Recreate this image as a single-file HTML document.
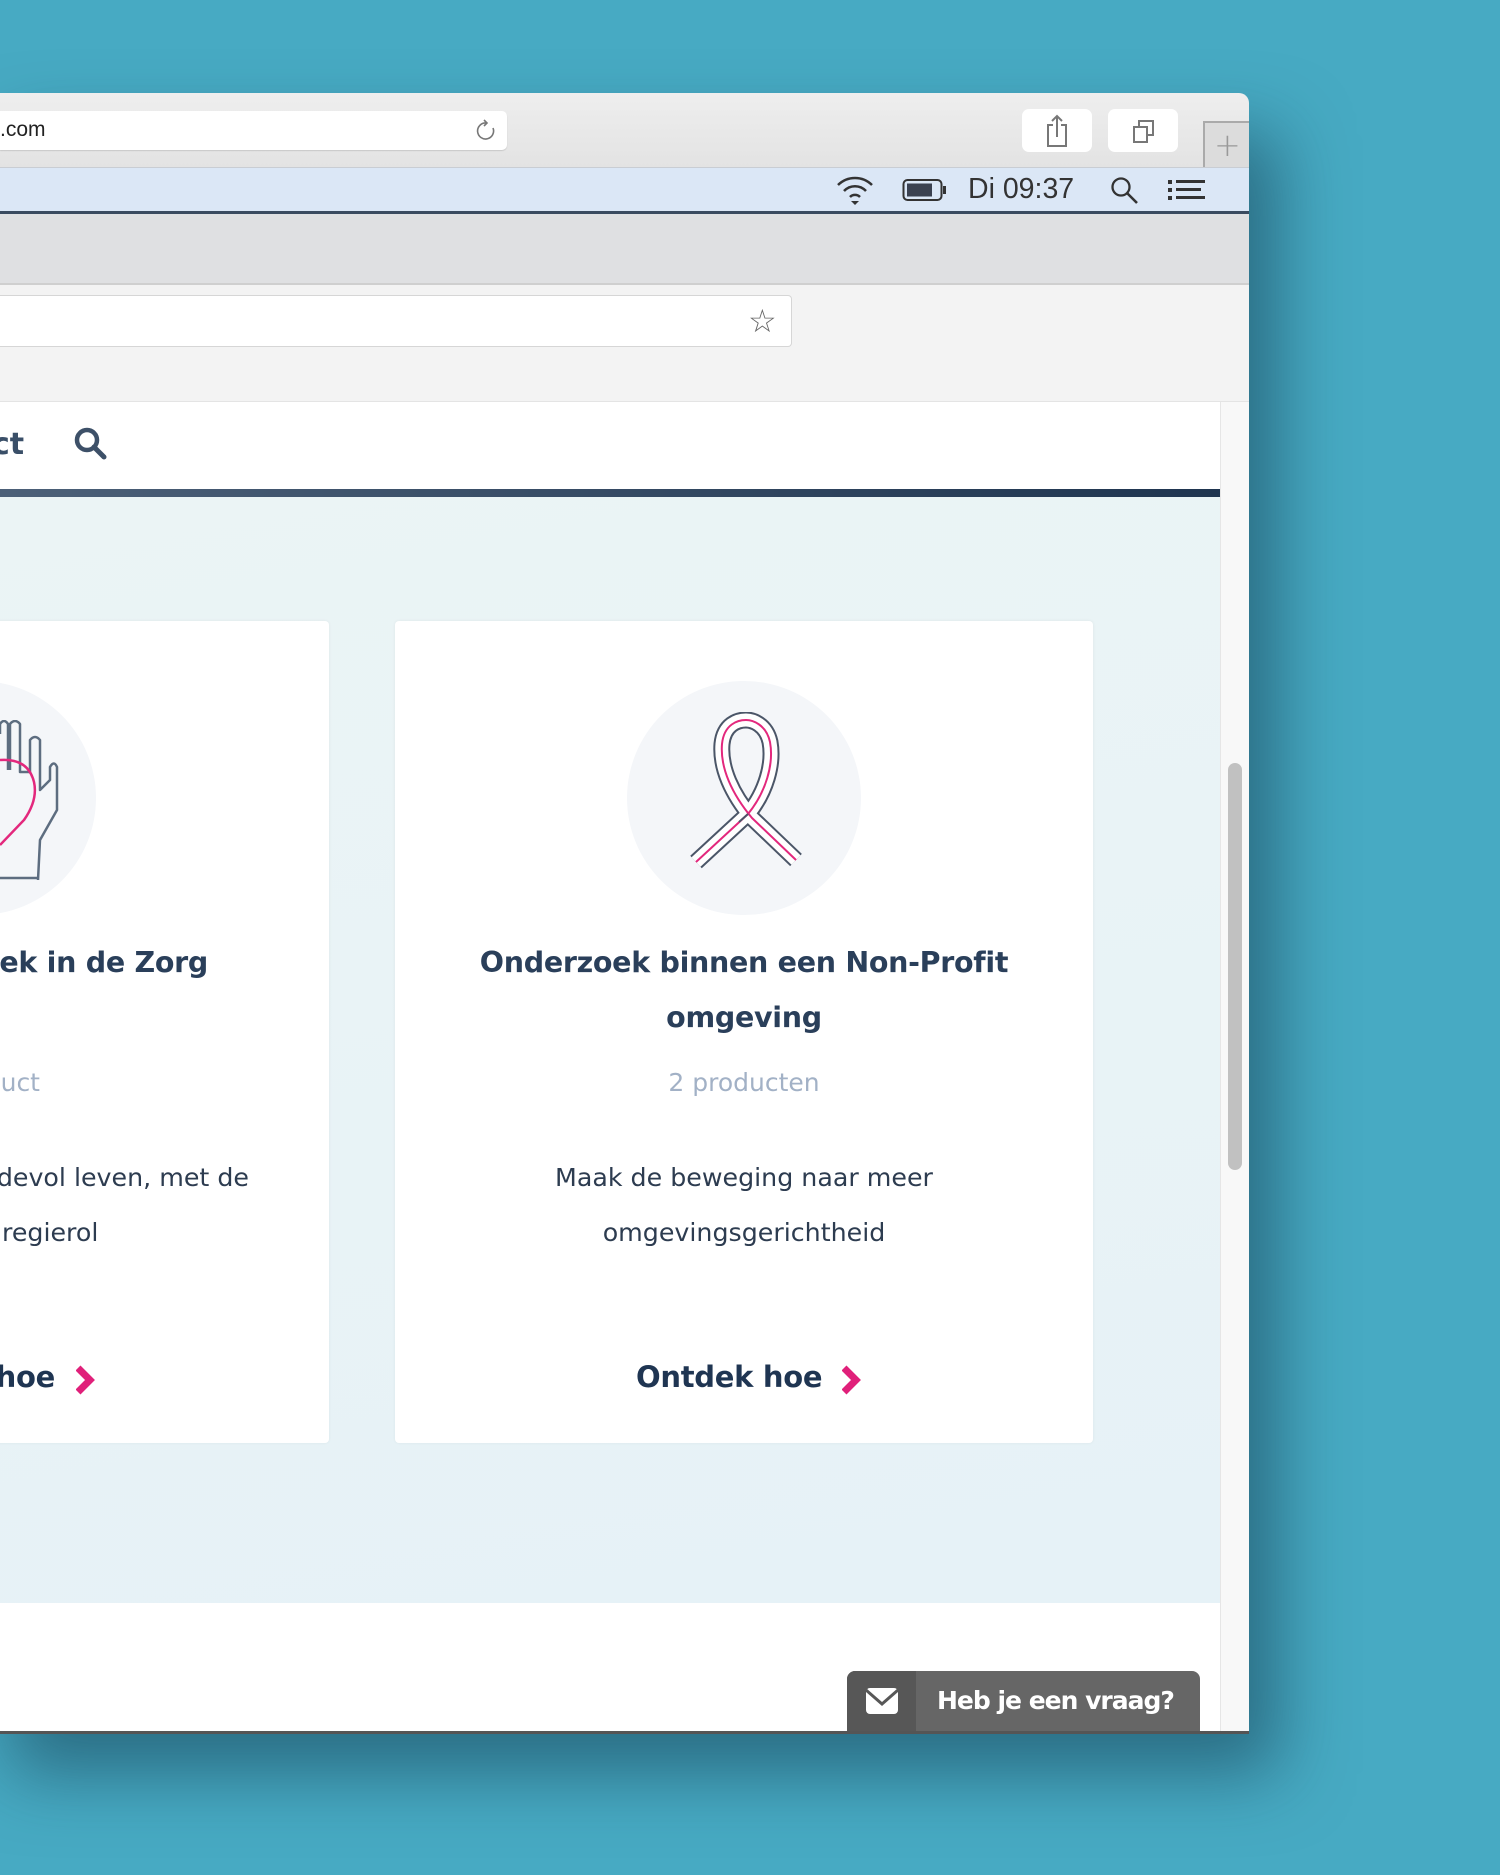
<!DOCTYPE html>
<html><head><meta charset="utf-8"><style>
*{margin:0;padding:0;box-sizing:border-box}
body{width:1500px;height:1875px;background:#47aac3;position:relative;overflow:hidden;font-family:"DejaVu Sans","Liberation Sans",sans-serif}
.abs{position:absolute}
.win{position:absolute;left:-20px;top:93px;width:1269px;height:1641px;border-radius:0 10px 6px 0;overflow:hidden;box-shadow:30px 40px 70px rgba(20,60,80,.55)}
.t{position:absolute;white-space:nowrap}
.title{font-weight:bold;font-size:28.5px;color:#2a3f5a;letter-spacing:-0.3px}
.cnt{font-size:25px;color:#a2b1c6}
.desc{font-size:25.3px;color:#2d3c50}
.more{font-weight:bold;font-size:29px;color:#1f3552;letter-spacing:-0.3px}
</style></head><body>
<div class="win"></div>
<div class="abs" style="left:0;top:93px;width:1249px;height:74px;background:linear-gradient(#eeeeee,#e3e3e3);border-radius:0 10px 0 0"></div>
<div class="abs" style="left:0;top:111px;width:507px;height:39px;background:#fff;border-radius:0 5px 5px 0;box-shadow:0 1px 1px #c8c8c8"></div>
<div class="t" style="left:0;top:118px;font-family:'Liberation Sans',sans-serif;font-size:21px;color:#222">.com</div>
<svg class="abs" style="left:475px;top:118px" width="22" height="26" viewBox="0 0 22 26"><path d="M11 5 A8 8 0 1 0 18 10" fill="none" stroke="#777" stroke-width="1.6"/><path d="M9 2 L12 5 L9 8" fill="none" stroke="#777" stroke-width="1.6"/></svg>
<div class="abs" style="left:1022px;top:109px;width:70px;height:43px;background:#fff;border-radius:7px"></div>
<div class="abs" style="left:1108px;top:109px;width:70px;height:43px;background:#fff;border-radius:7px"></div>
<svg class="abs" style="left:1045px;top:113px" width="24" height="36" viewBox="0 0 24 36"><path d="M8 12 H3 V33 H21 V12 H16 M12 24 V3 M7 8 L12 3 L17 8" fill="none" stroke="#777" stroke-width="2"/></svg>
<svg class="abs" style="left:1132px;top:118px" width="24" height="26" viewBox="0 0 24 26"><rect x="2" y="9" width="13" height="15" fill="none" stroke="#777" stroke-width="2"/><path d="M7 9 V3 H21 V17 H15" fill="none" stroke="#777" stroke-width="2"/></svg>
<div class="abs" style="left:1203px;top:121px;width:46px;height:46px;background:#dcdcdc;border-left:2px solid #aaa;border-top:2px solid #aaa"></div>
<div class="t" style="left:1214px;top:126px;font-size:32px;color:#999;font-weight:200">+</div>
<div class="abs" style="left:0;top:167px;width:1249px;height:45px;background:#dbe7f6;border-top:1px solid #c9cdd3"></div>
<svg class="abs" style="left:835px;top:174px" width="40" height="32" viewBox="0 0 40 32"><g fill="none" stroke="#333" stroke-width="2.5"><path d="M3 11 A24 24 0 0 1 37 11"/><path d="M9 17 A15 15 0 0 1 31 17"/><path d="M15 23 A7 7 0 0 1 25 23"/></g><path d="M16 27 L20 31 L24 27 Z" fill="#333"/></svg>
<svg class="abs" style="left:902px;top:178px" width="46" height="24" viewBox="0 0 46 24"><rect x="1.5" y="2" width="38" height="20" rx="4" fill="none" stroke="#333" stroke-width="2"/><rect x="5" y="5.5" width="25" height="13" fill="#3a4150"/><rect x="41" y="8" width="3" height="8" fill="#333"/></svg>
<div class="t" style="left:968px;top:173px;font-family:'Liberation Sans',sans-serif;font-size:28.5px;color:#333">Di 09:37</div>
<svg class="abs" style="left:1110px;top:176px" width="30" height="30" viewBox="0 0 30 30"><circle cx="11" cy="11" r="8.5" fill="none" stroke="#333" stroke-width="2.3"/><path d="M17 17 L27 27" stroke="#333" stroke-width="2.6"/></svg>
<svg class="abs" style="left:1168px;top:178px" width="38" height="24" viewBox="0 0 38 24"><g fill="#333"><rect x="0" y="2" width="4" height="4"/><rect x="0" y="10" width="4" height="4"/><rect x="0" y="18" width="4" height="4"/><rect x="8" y="2" width="29" height="3"/><rect x="8" y="10" width="25" height="3"/><rect x="8" y="18" width="29" height="3"/></g></svg>
<div class="abs" style="left:0;top:211px;width:1249px;height:3px;background:#3a4b60"></div>
<div class="abs" style="left:0;top:214px;width:1249px;height:71px;background:#dfe0e2;border-bottom:2px solid #cfcfcf"></div>
<div class="abs" style="left:0;top:285px;width:1249px;height:117px;background:#f3f3f3;border-bottom:1px solid #e4e4e4"></div>
<div class="abs" style="left:0;top:295px;width:792px;height:52px;background:#fff;border:1px solid #d6d6d6;border-left:none;border-radius:0 4px 4px 0"></div>
<div class="t" style="left:748px;top:302px;font-size:32px;color:#666">☆</div>
<div class="abs" style="left:0;top:402px;width:1220px;height:1332px;background:#fff"></div>
<div class="abs" style="left:1220px;top:402px;width:29px;height:1332px;background:#f8f8f8;border-left:1px solid #e6e6e6"></div>
<div class="abs" style="left:1228px;top:763px;width:14px;height:407px;background:#c1c1c1;border-radius:7px"></div>
<div class="t" style="left:-8px;top:427px;font-weight:bold;font-size:30px;color:#3a4f68">ct</div>
<svg class="abs" style="left:73px;top:426px" width="36" height="36" viewBox="0 0 36 36"><circle cx="14" cy="14" r="10" fill="none" stroke="#3d5068" stroke-width="4.5"/><path d="M21 21 L31 31" stroke="#3d5068" stroke-width="5" stroke-linecap="round"/></svg>
<div class="abs" style="left:0;top:489px;width:1220px;height:8px;background:linear-gradient(90deg,#4c6078,#1f3550)"></div>
<div class="abs" style="left:0;top:497px;width:1220px;height:1106px;background:linear-gradient(170deg,#ebf4f5,#e6f2f7)"></div>
<div class="abs" style="left:-10px;top:621px;width:339px;height:822px;background:#fff;border-radius:4px;box-shadow:0 0 3px rgba(0,0,0,.06)"></div>
<div class="abs" style="left:-138px;top:681px;width:234px;height:234px;border-radius:50%;background:#f4f6f9"></div>
<svg class="abs" style="left:0;top:720px" width="60" height="160" viewBox="0 0 60 160"><path d="M0 14 V4 Q4 -2 8 4 V50 M10 50 V4 Q15 -2 20 4 V52 L30 52 V20 Q35 14 40 20 V70 L50 60 V47 Q54 40 57 47 V90 L40 120 L38 160" fill="none" stroke="#5d6d80" stroke-width="2.5" stroke-linejoin="round"/><path d="M0 158 H38" stroke="#5d6d80" stroke-width="2.5"/><path d="M0 40 Q28 38 34 62 Q38 80 24 100 L0 125" fill="none" stroke="#e3287d" stroke-width="2.5"/></svg>
<div class="t title" style="right:1292px;top:946px">oek in de Zorg</div>
<div class="t cnt" style="right:1460px;top:1068px">uct</div>
<div class="t desc" style="right:1251px;top:1163px">devol leven, met de</div>
<div class="t desc" style="left:2px;top:1218px">regierol</div>
<div class="t more" style="right:1445px;top:1360px">hoe</div>
<svg class="abs" style="left:76px;top:1365px" width="22" height="30" viewBox="0 0 22 30"><path d="M2 3 L14 15 L2 27" fill="none" stroke="#e0207a" stroke-width="7"/></svg>
<div class="abs" style="left:395px;top:621px;width:698px;height:822px;background:#fff;border-radius:4px;box-shadow:0 0 3px rgba(0,0,0,.06)"></div>
<div class="abs" style="left:627px;top:681px;width:234px;height:234px;border-radius:50%;background:#f4f6f9"></div>
<svg class="abs" style="left:686px;top:712px" width="120" height="165" viewBox="0 0 120 165"><g fill="none" stroke-linecap="butt" stroke-linejoin="round"><path d="M10 150 L62 102 C80 80 88 52 84 30 C80 12 66 8 60 8 C52 8 38 12 36 32 C34 56 46 82 66 106 L110 148" stroke="#4b5668" stroke-width="17"/><path d="M10 150 L62 102 C80 80 88 52 84 30 C80 12 66 8 60 8 C52 8 38 12 36 32 C34 56 46 82 66 106 L110 148" stroke="#fff" stroke-width="13"/><path d="M10 150 L62 102 C80 80 88 52 84 30 C80 12 66 8 60 8 C52 8 38 12 36 32 C34 56 46 82 66 106 L110 148" stroke="#e3287d" stroke-width="2"/></g><path d="M62 102 L53 110" stroke="#4b5668" stroke-width="2"/></svg>
<div class="t title" style="left:395px;width:698px;text-align:center;top:946px">Onderzoek binnen een Non-Profit</div>
<div class="t title" style="left:395px;width:698px;text-align:center;top:1001px">omgeving</div>
<div class="t cnt" style="left:395px;width:698px;text-align:center;top:1068px">2 producten</div>
<div class="t desc" style="left:395px;width:698px;text-align:center;top:1163px">Maak de beweging naar meer</div>
<div class="t desc" style="left:395px;width:698px;text-align:center;top:1218px">omgevingsgerichtheid</div>
<div class="t more" style="left:636px;top:1360px">Ontdek hoe</div>
<svg class="abs" style="left:842px;top:1365px" width="22" height="30" viewBox="0 0 22 30"><path d="M2 3 L14 15 L2 27" fill="none" stroke="#e0207a" stroke-width="7"/></svg>
<div class="abs" style="left:847px;top:1671px;width:353px;height:61px;background:#666;border-radius:8px 8px 0 0;overflow:hidden"><div style="width:69px;height:61px;background:#575757"></div></div>
<svg class="abs" style="left:866px;top:1688px" width="32" height="26" viewBox="0 0 32 26"><rect x="0" y="0" width="32" height="26" rx="4" fill="#fff"/><path d="M0 2 L16 16 L32 2" fill="none" stroke="#575757" stroke-width="3"/></svg>
<div class="t" style="left:937px;top:1686px;font-family:'DejaVu Sans',sans-serif;font-weight:bold;font-size:25px;color:#fff;letter-spacing:-1px">Heb je een vraag?</div>
<div class="abs" style="left:0;top:1731px;width:1249px;height:3px;background:#555"></div>
</body></html>
